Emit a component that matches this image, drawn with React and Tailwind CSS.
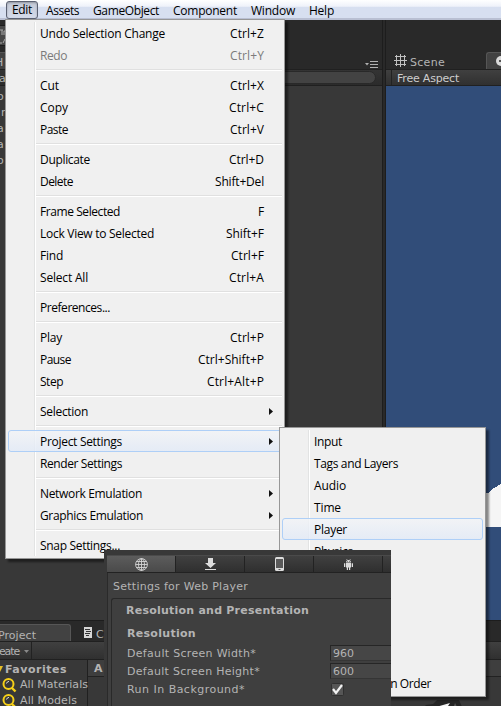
import { useLayoutEffect, useRef } from "react";

const UI = "font-['Open_Sans','Noto_Sans',sans-serif] text-[12px]";
const DARK = "font-['DejaVu_Sans',sans-serif] text-[11px] text-[#b4b4b4]";

// Label whose tracking is adjusted so the text spans exactly `w` pixels.
function Label({ w, className = "", children }) {
  const ref = useRef(null);
  useLayoutEffect(() => {
    const el = ref.current;
    const fit = () => {
      el.style.letterSpacing = "0px";
      const natural = el.getBoundingClientRect().width;
      el.style.letterSpacing = `${(w - natural) / children.length}px`;
    };
    fit();
    document.fonts?.ready.then(fit);
  }, [w, children]);
  return (
    <span ref={ref} className={`inline-block shrink-0 whitespace-pre ${className}`}>
      {children}
    </span>
  );
}

const editMenu = [
  ["Undo Selection Change", 125, "Ctrl+Z", 34],
  ["Redo", 27, "Ctrl+Y", 34, "off"],
  null,
  ["Cut", 19, "Ctrl+X", 34],
  ["Copy", 28, "Ctrl+C", 35],
  ["Paste", 28, "Ctrl+V", 34],
  null,
  ["Duplicate", 50, "Ctrl+D", 35],
  ["Delete", 33, "Shift+Del", 49],
  null,
  ["Frame Selected", 80, "F", 6],
  ["Lock View to Selected", 114, "Shift+F", 38],
  ["Find", 23, "Ctrl+F", 33],
  ["Select All", 48, "Ctrl+A", 35],
  null,
  ["Preferences...", 70],
  null,
  ["Play", 22, "Ctrl+P", 34],
  ["Pause", 31, "Ctrl+Shift+P", 66],
  ["Step", 23, "Ctrl+Alt+P", 57],
  null,
  ["Selection", 48, ">"],
  null,
  ["Project Settings", 82, ">", 0, "hot"],
  ["Render Settings", 82],
  null,
  ["Network Emulation", 102, ">"],
  ["Graphics Emulation", 103, ">"],
  null,
  ["Snap Settings...", 80],
];

const settingsMenu = [
  ["Input", 28],
  ["Tags and Layers", 84],
  ["Audio", 32],
  ["Time", 27],
  ["Player", 33, null, 0, "hot"],
  ["Physics", 39],
  ["Physics 2D", 56],
  ["Quality", 38],
  ["Graphics", 47],
  ["Network", 46],
  ["Editor", 32],
  ["Script Execution Order", 117],
];

function Menu({ items, className }) {
  return (
    <div
      className={`absolute border border-[#979797] bg-[#f0f0f0] px-[2px] pt-[2px] shadow-[3px_3px_2px_rgba(0,0,0,0.45)] ${UI} text-black ${className}`}
    >
      <div className="absolute top-[2px] bottom-[2px] left-[28px] w-[2px] border-l border-[#e2e3e3] bg-white" />
      {items.map((it, i) =>
        it ? (
          <div
            key={i}
            className={`relative flex h-[22px] items-center rounded-[3px] border pr-[17px] pl-[31px] leading-[20px] ${
              it[4] === "hot"
                ? "border-[#aecff7] bg-linear-to-b from-[#f2f4f7]/80 to-[#e2eaf7]/80"
                : "border-transparent"
            } ${it[4] === "off" ? "text-[#7b7b7b]" : ""}`}
          >
            <Label w={it[1]} className="pt-[2px]">{it[0]}</Label>
            <span className="flex-1" />
            {it[2] === ">" ? (
              <svg width="4" height="7" viewBox="0 0 4 7" className="mr-[-9px]">
                <path d="M0 0L4 3.5L0 7Z" fill="#111" />
              </svg>
            ) : it[2] ? (
              <Label w={it[3]} className="pt-[2px]">{it[2]}</Label>
            ) : null}
          </div>
        ) : (
          <div key={i} className="relative flex h-2 items-center pl-[28px]">
            <div className="h-[2px] flex-1 border-t border-[#e0e0e0] bg-white" />
          </div>
        ),
      )}
    </div>
  );
}

function MenuBar() {
  return (
    <div
      className={`flex h-5 shrink-0 items-center border-b-2 border-[#b9bfd2] bg-linear-to-b from-white from-0% via-[#eff2fa] via-35% to-[#d7dff0] to-40% pl-[6px] text-black ${UI} leading-[17px]`}
    >
      <div className="mt-px flex h-[18px] w-8 items-center rounded-[3px] border border-[#5b6172] bg-linear-to-b from-[#c3c9d6] to-[#d5dbea] pl-[5px] shadow-[inset_0_1px_2px_rgba(0,0,0,0.25)]">
        <Label w={20}>Edit</Label>
      </div>
      <Label w={33} className="mt-[2px] ml-2">Assets</Label>
      <Label w={66} className="mt-[2px] ml-[14px]">GameObject</Label>
      <Label w={64} className="mt-[2px] ml-[14px]">Component</Label>
      <Label w={44} className="mt-[2px] ml-[14px]">Window</Label>
      <Label w={25} className="mt-[2px] ml-[14px]">Help</Label>
    </div>
  );
}

function HierarchyPane() {
  return (
    <div className="flex w-[382px] shrink-0 flex-col bg-[#383838]">
      <div className="flex h-[49px] items-end justify-between bg-[#292929]">
        <div className="flex h-full w-[6px] flex-col overflow-hidden">
          <div className="mt-[5px] h-[21px] border-y border-[#1c1c1c] bg-[#484848]">
            <svg width="6" height="19" viewBox="0 0 6 19" fill="none" stroke="#a8a8a8">
              <path d="M0 4H3M2 4V9M4 9V5H6M0 17H2M3 17L5 13" />
            </svg>
          </div>
          <div className={`mt-[6px] h-[17px] border-t border-[#555] bg-[#424242] ${DARK} leading-[19px]`}>
            <Label w={9} className="ml-[-5px]">H</Label>
          </div>
        </div>
        <svg width="16" height="9" viewBox="0 0 16 9" className="mr-[2px]">
          <path d="M1 3H5L3 5.5Z" fill="#b0b0b0" />
          <path d="M6 1.5H14M6 4.5H14M6 7.5H14" stroke="#b0b0b0" />
        </svg>
      </div>
      <div className="flex h-[17px] items-center border-y border-[#202020] bg-linear-to-b from-[#343434] to-[#2b2b2b] pr-[6px]">
        <span className={`w-[6px] overflow-hidden ${DARK} text-[10px] leading-[15px]`}>
          <Label w={12} className="ml-[-7px] pt-px">ea</Label>
        </span>
        <div className="h-[13px] flex-1 rounded-r-full border border-[#292929] bg-[#434343]" />
      </div>
      <div className={`flex w-[6px] flex-col overflow-hidden pt-[3px] ${DARK} leading-[16px]`}>
        {["o", "r", "a", "a", "o"].map((c, i) => (
          <span key={i} className={i === 1 ? "ml-px" : "ml-[-3px]"}>{c}</span>
        ))}
      </div>
    </div>
  );
}

function GamePane() {
  return (
    <div className="flex min-w-0 flex-1 flex-col bg-[#314d79]">
      <div className="flex h-[49px] items-end bg-[#292929]">
        <svg width="13" height="13" viewBox="0 0 13 13" className="mb-[2px] ml-2 shrink-0" stroke="#c0c0c0" fill="none">
          <path d="M2.5 1V12M6.5 0V13M10.5 1V12M1 2.5H12M0 6.5H13M1 10.5H12" />
        </svg>
        <div className={`ml-[3px] h-[14px] ${DARK} leading-[15px] text-[#909090]`}>
          <Label w={35}>Scene</Label>
        </div>
        <div className="ml-[41px] flex h-[17px] flex-1 items-center overflow-hidden rounded-tl-[3px] border-t border-l border-[#565656] bg-[#424242] pl-[9px]">
          <svg width="10" height="10" viewBox="0 0 10 10" className="shrink-0">
            <circle cx="5" cy="5" r="5" fill="#dadada" />
            <path d="M3 5H9" stroke="#555" strokeWidth="2" />
          </svg>
        </div>
      </div>
      <div className={`flex h-[17px] items-center border-y border-[#202020] bg-linear-to-b from-[#404040] to-[#303030] ${DARK} text-[10px] leading-[15px]`}>
        <span className="h-full w-[6px] border-r border-[#222]" />
        <Label w={62} className="ml-[5px] pt-px text-[#cdcdcd]">Free Aspect</Label>
      </div>
      <div className="flex flex-1 justify-end pt-[397px]">
        <svg width="15" height="44" viewBox="0 0 15 44" shapeRendering="crispEdges">
          <path d="M0 10L2 10L5 7L8 5L15 1V44H0Z" fill="#f5f5f5" />
        </svg>
      </div>
    </div>
  );
}

function Magnifier() {
  return (
    <svg width="15" height="15" viewBox="0 0 15 15" fill="none" className="shrink-0">
      <circle cx="6.5" cy="6" r="5" stroke="#f5cf18" strokeWidth="2" />
      <path d="M10 10L13.5 13.5" stroke="#f5cf18" strokeWidth="2.4" />
      <path d="M4.5 5.5Q5 3.5 7 3.4" stroke="#ddd" />
    </svg>
  );
}

function ProjectPane() {
  return (
    <div className="flex h-[86px] shrink-0 flex-col overflow-hidden border-t border-[#1d1d1d] bg-[#383838]">
      <div className="flex h-[20px] shrink-0 items-end bg-[#292929]">
        <div className={`flex h-[17px] w-[71px] items-center rounded-tr-[3px] border-t border-r border-[#565656] bg-[#424242] ${DARK} leading-[16px]`}>
          <Label w={38} className="ml-[-2px] pt-[5px]">Project</Label>
        </div>
        <svg width="8" height="11" viewBox="0 0 8 11" className="mb-[3px] ml-[13px]">
          <path d="M0 0H8V11H0Z" fill="#d6d6d6" />
          <path d="M1 2.5H6M2 4.5H7M1 6.5H6M2 8.5H5" stroke="#333" />
        </svg>
        <span className={`ml-[4px] h-[14px] ${DARK} leading-[15px] text-[#909090]`}>Console</span>
      </div>
      <div className={`flex h-[19px] shrink-0 items-center border-y border-[#202020] bg-linear-to-b from-[#404040] to-[#303030] ${DARK} text-[10px] leading-[15px]`}>
        <Label w={20} className="ml-[-1px] pt-px">eate</Label>
        <svg width="5" height="3" viewBox="0 0 5 3" className="mt-px ml-[5px]">
          <path d="M0 0H5L2.5 3Z" fill="#8a8a8a" />
        </svg>
        <span className="ml-[2px] h-full w-px bg-[#222]" />
      </div>
      <div className="flex flex-1">
        <div className={`flex w-[88px] flex-col border-r border-[#202020] ${DARK}`}>
          <div className="flex h-[17px] shrink-0 items-center font-bold leading-[17px]">
            <svg width="5" height="8" viewBox="0 0 5 8"><path d="M0 1L3 1L0 7Z" fill="#e7bf27" /></svg>
            <Label w={62} className="pt-px">Favorites</Label>
          </div>
          <div className="flex h-4 shrink-0 items-center gap-[3px] pl-[2px]">
            <Magnifier />
            <Label w={68} className="pt-px">All Materials</Label>
          </div>
          <div className="flex h-4 shrink-0 items-center gap-[3px] pl-[2px]">
            <Magnifier />
            <Label w={57} className="pt-px">All Models</Label>
          </div>
        </div>
        <div className="flex flex-1 flex-col">
          <div className={`h-[17px] border-b border-[#222] bg-[#3e3e3e] pl-[6px] ${DARK} font-bold leading-[18px]`}>A</div>
          <div className="flex flex-1 items-end pl-[334px]">
            <svg width="42" height="9" viewBox="0 0 42 9">
              <path d="M0 9L4 5L11 4L15 0H37L41 9Z" fill="#242424" />
              <path d="M9 9L14 7L28 3L24 9Z" fill="#f4f4f4" />
              <path d="M33 3L36 9H31Z" fill="#555" />
            </svg>
          </div>
        </div>
      </div>
    </div>
  );
}

const platformIcons = [
  <svg key="web" width="13" height="13" viewBox="0 0 13 13" fill="none" stroke="#d5d5d5" strokeWidth="0.9">
    <circle cx="6.5" cy="6.5" r="5.9" />
    <ellipse cx="6.5" cy="6.5" rx="3" ry="5.9" />
    <path d="M6.5 .5V12.5M.5 6.5H12.5M1.5 3.5H11.5M1.5 9.5H11.5" />
  </svg>,
  <svg key="pc" width="11" height="12" viewBox="0 0 11 12" fill="#dcdcdc">
    <path d="M3 0H8V5H11L5.5 10L0 5H3ZM0 11H11V12H0Z" />
  </svg>,
  <svg key="phone" width="9" height="14" viewBox="0 0 9 14">
    <rect width="9" height="14" rx="1.5" fill="#dcdcdc" />
    <path d="M1 2H8V11H1Z" fill="#5a5a5a" />
    <path d="M3.5 12.5H5.5" stroke="#555" />
  </svg>,
  <svg key="android" width="9" height="11" viewBox="0 0 9 11" fill="#dcdcdc">
    <path d="M2 3.5Q2 1 4.5 1Q7 1 7 3.5ZM2 4H7V8.5H6.2V11H5V8.5H4V11H2.8V8.5H2ZM0 4.3H1.3V8H0ZM7.7 4.3H9V8H7.7Z" />
    <path d="M2.5 0L3.5 1.5M6.5 0L5.5 1.5" stroke="#dcdcdc" strokeWidth=".6" />
    <path d="M3.2 2.3h.7v.7h-.7zM5.2 2.3h.7v.7h-.7z" fill="#333" />
  </svg>,
];

function PlayerSettings() {
  return (
    <div className={`absolute top-[550px] left-[104px] flex h-[156px] w-[287px] flex-col overflow-hidden bg-[#383838] pt-[5px] pl-[3px] ${DARK}`}>
      <div className="flex h-[18px] shrink-0 border-y border-t-[#4a4a4a] border-b-[#222]">
        {platformIcons.map((icon, i) => (
          <div
            key={i}
            className={`flex w-[69px] shrink-0 items-center justify-center border-r border-[#222] bg-linear-to-b ${
              i === 0 ? "from-[#5c5c5c] to-[#4a4a4a]" : "from-[#404040] to-[#2f2f2f]"
            }`}
          >
            {icon}
          </div>
        ))}
        <div className="flex-1 bg-linear-to-b from-[#404040] to-[#2f2f2f]" />
      </div>
      <div className="flex flex-1 flex-col border-l border-[#2a2a2a] bg-[#3f3f3f] pl-[3px]">
        <div className="h-[25px] shrink-0 pl-[2px] leading-[28px]">
          <Label w={135}>Settings for Web Player</Label>
        </div>
        <div className="flex-1 rounded-tl-[3px] border-t border-l border-[#292929] bg-[#3f3f3f] pl-[14px]">
          <div className="h-[23px] font-bold leading-[23px]">
            <Label w={183}>Resolution and Presentation</Label>
          </div>
          <div className="h-[22px] pl-px font-bold leading-[24px]">
            <Label w={69}>Resolution</Label>
          </div>
          {[
            ["Default Screen Width*", 129, "960"],
            ["Default Screen Height*", 133, "600"],
            ["Run In Background*", 118, null],
          ].map(([name, w, value]) => (
            <div key={name} className="flex h-[18px] items-center pl-px">
              <div className="w-[203px] pt-px leading-[18px]"><Label w={w}>{name}</Label></div>
              {value ? (
                <div className="h-4 flex-1 border border-r-0 border-[#262626] border-b-[#353535] bg-[#464646] pl-[2px] leading-[15px]">
                  <Label w={21}>{value}</Label>
                </div>
              ) : (
                <svg width="13" height="13" viewBox="0 0 13 13" className="ml-px">
                  <rect x=".5" y=".5" width="12" height="12" rx="1" fill="#565656" stroke="#303030" />
                  <path d="M2 6L5 10L11 2" stroke="#f2f2f2" strokeWidth="2.2" fill="none" />
                </svg>
              )}
            </div>
          ))}
        </div>
      </div>
    </div>
  );
}

export default function App() {
  return (
    <div className="relative flex h-[706px] w-[501px] flex-col overflow-hidden bg-[#292929]">
      <MenuBar />
      <div className="flex min-h-0 flex-1">
        <HierarchyPane />
        <div className="w-1 shrink-0 border-x border-[#1d1d1d] bg-[#292929]" />
        <GamePane />
      </div>
      <ProjectPane />
      <Menu items={editMenu} className="top-[19px] left-[5px] h-[540px] w-[280px]" />
      <Menu items={settingsMenu} className="top-[427px] left-[279px] h-[270px] w-[207px]" />
      <PlayerSettings />
    </div>
  );
}
